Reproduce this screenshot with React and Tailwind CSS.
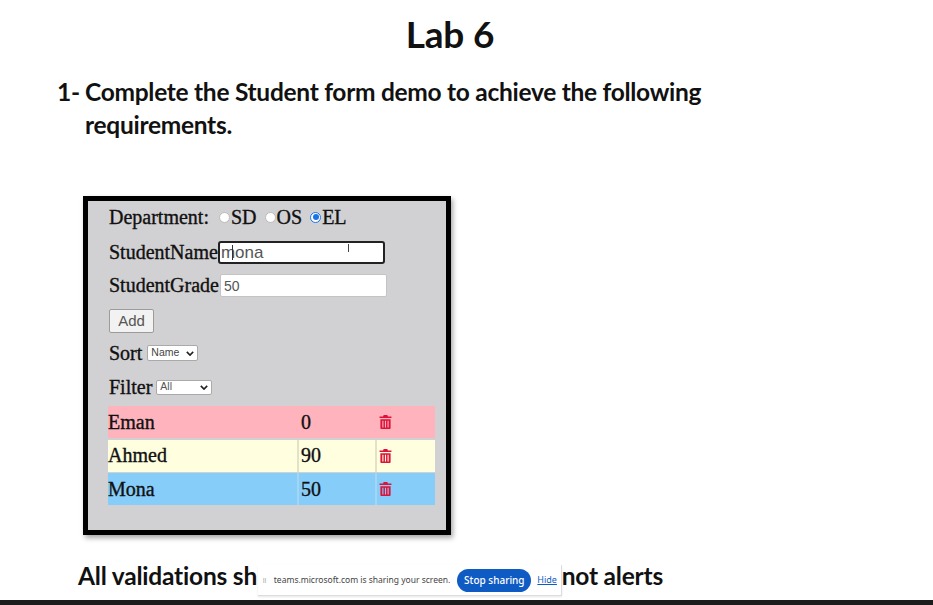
import React from "react";

const serif = "[font-family:'Liberation_Serif',serif]";

function Trash({ className = "" }) {
  return (
    <svg viewBox="0 0 14 16" className={`w-[13px] h-[16px] ${className}`} fill="#dc143c">
      <path d="M5 0.5h4l0.6 1.6H13.4v1.7H0.6V2.1H4.4z" />
      <path fillRule="evenodd" d="M1.5 5h11v9.4c0 .7-.5 1.2-1.2 1.2H2.7c-.7 0-1.2-.5-1.2-1.2zM3.6 6.6v7.4h1.2V6.6zM6.4 6.6v7.4h1.2V6.6zM9.2 6.6v7.4h1.2V6.6z" />
    </svg>
  );
}

function Radio({ checked }) {
  return (
    <span className={`inline-block w-[11px] h-[11px] rounded-full border ${checked ? "border-[#1a73e8] bg-white p-[1.5px]" : "border-[#bbbbbb] bg-white"}`}>
      {checked && <span className="block w-full h-full rounded-full bg-[#1a73e8]" />}
    </span>
  );
}

function Row({ name, grade, bg, divider }) {
  return (
    <div className={`flex h-[32px] items-center text-[20px] text-[#111111] ${bg}`}>
      <div className={`w-[191px] h-full flex items-center pb-[1px] border-r-2 ${divider}`}>{name}</div>
      <div className={`w-[78px] h-full flex items-center pb-[1px] pl-[2px] border-r-2 ${divider}`}>{grade}</div>
      <div className="flex-1 flex items-center pl-[2px]"><Trash /></div>
    </div>
  );
}

export default function App() {
  return (
    <div className="relative w-[933px] h-[605px] overflow-hidden bg-white flex flex-col font-['Lato',sans-serif] text-[#111111]">
      <h1 className="w-[900px] mt-[12px] text-center text-[37px] leading-[44px] font-bold tracking-[-0.2px]">Lab 6</h1>

      <div className="flex ml-[57px] mt-[19px] text-[24.5px] leading-[33px] font-bold tracking-[-0.28px]">
        <span className="w-[28px] shrink-0">1-</span>
        <p className="w-[660px]">Complete the Student form demo to achieve the following requirements.</p>
      </div>

      <div className={`ml-[83px] mt-[55px] w-[368px] h-[339px] border-[5px] border-black bg-[#d1d0d3] shadow-[2px_3px_5px_rgba(0,0,0,0.35)] pl-[21px] pr-[10px] pt-[4px] ${serif} text-[20px] [-webkit-text-stroke:0.35px_#111111]`}>
        <div className="flex items-center h-[24px] leading-none">
          <span>Department:</span>
          <span className="ml-[10px] flex items-center gap-[1px]"><Radio />SD</span>
          <span className="ml-[8px] flex items-center gap-[1px]"><Radio />OS</span>
          <span className="ml-[8px] flex items-center gap-[1px]"><Radio checked />EL</span>
        </div>

        <div className="flex items-center h-[24px] mt-[11px]">
          <span>StudentName</span>
          <div className="w-[167px] h-[23px] bg-white border-2 border-[#222222] rounded-[3px] pl-[1px] font-['Liberation_Sans',sans-serif] text-[17px] leading-[20px] text-[#555555] [-webkit-text-stroke:0] relative">
            mona
            <span className="absolute left-[12px] top-[2px] w-[1px] h-[15px] bg-[#333333]" />
            <span className="absolute left-[128px] top-[1px] w-[1px] h-[8px] bg-[#444444]" />
          </div>
        </div>

        <div className="flex items-center h-[24px] mt-[9px]">
          <span>StudentGrade</span>
          <div className="ml-[1px] w-[167px] h-[23px] bg-white border border-[#c4c4c4] rounded-[2px] pl-[3px] font-['Liberation_Sans',sans-serif] text-[14px] leading-[22px] text-[#555555] [-webkit-text-stroke:0]">50</div>
        </div>

        <div className="mt-[12px] w-[45px] h-[24px] bg-[#f2f2f2] border border-[#9c9c9c] rounded-[2px] flex items-center justify-center font-['Liberation_Sans',sans-serif] text-[15px] text-[#555555] [-webkit-text-stroke:0]">Add</div>

        <div className="flex items-center h-[24px] mt-[8px]">
          <span>Sort</span>
          <div className="ml-[5px] w-[51px] h-[16px] bg-white border border-[#aaaaaa] rounded-[2px] pl-[3px] flex items-center justify-between pr-[3px] font-['Liberation_Sans',sans-serif] text-[10.5px] text-[#444444] [-webkit-text-stroke:0]">
            Name
            <svg viewBox="0 0 10 6" className="w-[8px] h-[5px]" fill="none" stroke="#222222" strokeWidth="2"><path d="M1 1l4 4 4-4" /></svg>
          </div>
        </div>

        <div className="flex items-center h-[24px] mt-[10px]">
          <span>Filter</span>
          <div className="ml-[4px] w-[56px] h-[15px] bg-white border border-[#aaaaaa] rounded-[2px] pl-[3px] flex items-center justify-between pr-[3px] font-['Liberation_Sans',sans-serif] text-[10.5px] text-[#555555] [-webkit-text-stroke:0]">
            All
            <svg viewBox="0 0 10 6" className="w-[8px] h-[5px]" fill="none" stroke="#222222" strokeWidth="2"><path d="M1 1l4 4 4-4" /></svg>
          </div>
        </div>

        <div className="mt-[7px] w-[327px] flex flex-col gap-[1.5px] -ml-[1px]">
          <Row name="Eman" grade="0" bg="bg-[#ffb3bc]" divider="border-[#ffb3bc]" />
          <Row name="Ahmed" grade="90" bg="bg-[#ffffdf]" divider="border-[#e3e2c8]" />
          <Row name="Mona" grade="50" bg="bg-[#87cdf9]" divider="border-[#a4d6f4]" />
        </div>
      </div>

      <div className="flex ml-[78px] mt-[25px] w-[585px] justify-between text-[24.5px] leading-[32px] font-bold tracking-[-0.2px] whitespace-pre">
        <span>All validations sh</span>
        <span>not alerts</span>
      </div>

      <div className="mt-auto h-[5px] bg-[#1c1c1c]" />

      <div className="absolute left-[258px] top-[565px] w-[304px] h-[31px] bg-white border-b border-r border-[#dddddd] shadow-[0_1px_2px_rgba(0,0,0,0.1)] flex items-center font-['Noto_Sans',sans-serif]">
        <span className="ml-[4px] text-[8px] text-[#aaaaaa]">॥</span>
        <span className="ml-[7px] text-[8.5px] text-[#444444] whitespace-nowrap">teams.microsoft.com is sharing your screen.</span>
        <span className="ml-[7px] w-[74px] h-[23px] rounded-full bg-[#0f5bc4] text-white text-[10px] font-medium flex items-center justify-center whitespace-nowrap">Stop sharing</span>
        <span className="ml-[6px] text-[9px] text-[#0f5bc4] underline">Hide</span>
      </div>
    </div>
  );
}
